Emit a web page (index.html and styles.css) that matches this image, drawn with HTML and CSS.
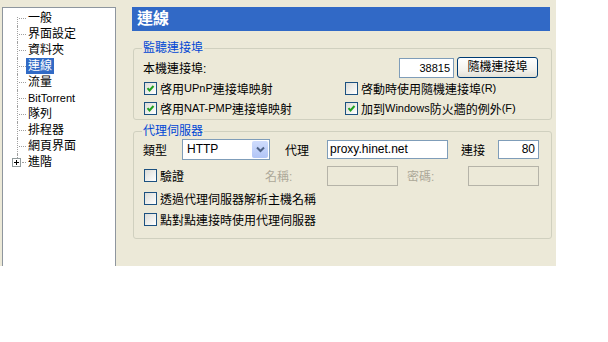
FILE: index.html
```html
<!DOCTYPE html>
<html lang="zh-Hant">
<head>
<meta charset="utf-8">
<title>連線</title>
<link rel="stylesheet" href="styles.css">
</head>
<body>
<div class="window">
  <div class="tree">
    <ul class="tree-list">
      <li class="tree-item first"><span class="tree-label">一般</span></li>
      <li class="tree-item"><span class="tree-label">界面設定</span></li>
      <li class="tree-item"><span class="tree-label">資料夾</span></li>
      <li class="tree-item"><span class="tree-label selected">連線</span></li>
      <li class="tree-item"><span class="tree-label">流量</span></li>
      <li class="tree-item"><span class="tree-label lt">BitTorrent</span></li>
      <li class="tree-item"><span class="tree-label">隊列</span></li>
      <li class="tree-item"><span class="tree-label">排程器</span></li>
      <li class="tree-item"><span class="tree-label">網頁界面</span></li>
      <li class="tree-item last"><span class="expander"><svg width="7" height="7" viewBox="0 0 7 7"><path d="M1 3.5h5M3.5 1v5" stroke="#000" stroke-width="1"/></svg></span><span class="tree-label">進階</span></li>
    </ul>
  </div>
  <div class="main">
    <div class="header">連線</div>
    <fieldset class="group group-listen">
      <legend>監聽連接埠</legend>
      <div class="port-row">
        <span class="port-label">本機連接埠:</span>
        <span class="field field-port">38815</span>
        <span class="button">隨機連接埠</span>
      </div>
      <div class="check-grid">
        <label class="check"><span class="box"><svg width="11" height="11" viewBox="0 0 11 11"><path d="M2.5 5.2l2 2.2 4-4.4" fill="none" stroke="#21A121" stroke-width="2"/></svg></span>啓用<span class="lt">UPnP</span>連接埠映射</label>
        <label class="check"><span class="box"></span>啓動時使用隨機連接埠<span class="lt">(R)</span></label>
        <label class="check"><span class="box"><svg width="11" height="11" viewBox="0 0 11 11"><path d="M2.5 5.2l2 2.2 4-4.4" fill="none" stroke="#21A121" stroke-width="2"/></svg></span>啓用<span class="lt">NAT-PMP</span>連接埠映射</label>
        <label class="check"><span class="box"><svg width="11" height="11" viewBox="0 0 11 11"><path d="M2.5 5.2l2 2.2 4-4.4" fill="none" stroke="#21A121" stroke-width="2"/></svg></span>加到<span class="lt">Windows</span>防火牆的例外<span class="lt">(F)</span></label>
      </div>
    </fieldset>
    <fieldset class="group group-proxy">
      <legend>代理伺服器</legend>
      <div class="proxy-row">
        <span class="lbl lbl-type">類型</span>
        <span class="select"><span class="select-text">HTTP</span><span class="select-btn"><svg width="9" height="7" viewBox="0 0 9 7"><path d="M1 1.5l3.5 3.5 3.5-3.5" fill="none" stroke="#4D6185" stroke-width="2"/></svg></span></span>
        <span class="lbl lbl-proxy">代理</span>
        <span class="field field-host">proxy.hinet.net</span>
        <span class="lbl lbl-conn">連接</span>
        <span class="field field-num">80</span>
      </div>
      <div class="auth-row">
        <label class="check check-auth"><span class="box"></span>驗證</label>
        <span class="lbl lbl-name disabled">名稱:</span>
        <span class="field field-off"></span>
        <span class="lbl lbl-pass disabled">密碼:</span>
        <span class="field field-off"></span>
      </div>
      <label class="check check-line"><span class="box"></span>透過代理伺服器解析主機名稱</label>
      <label class="check check-line"><span class="box"></span>點對點連接時使用代理伺服器</label>
    </fieldset>
  </div>
</div>
</body>
</html>
```
FILE: styles.css
```css
html, body {
  margin: 0;
  padding: 0;
  background: #ffffff;
}
body {
  font-family: "Liberation Sans", "Noto Sans CJK TC", sans-serif;
  font-size: 12px;
  color: #000;
}
.lt {
  font-size: 11px;
}
.window {
  width: 556px;
  height: 266px;
  background: #ECE9D8;
  display: flex;
  align-items: flex-start;
}
.tree {
  margin: 7px 0 0 2px;
  width: 112px;
  height: 259px;
  background: #fff;
  border: 1px solid #8E969E;
  border-bottom: none;
}
.tree-list {
  list-style: none;
  margin: 0;
  padding: 2px 0 0 0;
}
.tree-item {
  position: relative;
  height: 16px;
  line-height: 16px;
  padding-left: 23px;
}
.tree-item::before {
  content: "";
  position: absolute;
  left: 14px;
  top: 0;
  height: 16px;
  border-left: 1px dotted #A0A0A0;
}
.tree-item.first::before {
  top: 7px;
  height: 9px;
}
.tree-item.last::before {
  height: 4px;
}
.tree-item::after {
  content: "";
  position: absolute;
  left: 16px;
  width: 7px;
  top: 8px;
  border-top: 1px dotted #A0A0A0;
}
.tree-item.last::after {
  left: 19px;
  width: 4px;
}
.expander {
  position: absolute;
  left: 9px;
  top: 4px;
  width: 7px;
  height: 7px;
  border: 1px solid #919B9C;
  background: #fff;
  display: flex;
}
.tree-label {
  display: inline-block;
  padding: 0 2px;
  line-height: 16px;
  vertical-align: top;
}
.tree-label.selected {
  background: #316AC5;
  color: #fff;
}
.main {
  margin-left: 16px;
  padding-top: 7px;
  width: 420px;
}
.header {
  width: 418px;
  height: 24px;
  line-height: 24px;
  background: #3169C6;
  color: #fff;
  font-weight: bold;
  font-size: 16px;
  padding-left: 5px;
  box-sizing: border-box;
}
.group {
  margin: 0 0 0 1px;
  width: 419px;
  box-sizing: border-box;
  border: 1px solid #D0D0BF;
  border-radius: 3px;
  padding: 0 8px;
}
.group legend {
  color: #0046D5;
  padding: 0 1px;
  line-height: 14px;
  font-size: 12px;
}
.group-listen {
  margin-top: 10px;
  padding-bottom: 0;
}
.group-proxy {
  margin-top: 4px;
  padding-bottom: 8px;
}
.port-row {
  display: flex;
  align-items: center;
  height: 21px;
  margin-top: 2px;
  padding-left: 1px;
}
.port-label {
  flex: 1;
}
.field {
  box-sizing: border-box;
  height: 20px;
  line-height: 18px;
  border: 1px solid #7F9DB9;
  background: #fff;
  padding: 0 3px;
  display: inline-block;
  white-space: nowrap;
}
.field-port {
  width: 55px;
  text-align: right;
  font-size: 11px;
  margin-right: 3px;
}
.button {
  box-sizing: border-box;
  width: 81px;
  height: 21px;
  line-height: 19px;
  text-align: center;
  border: 1px solid #003C74;
  border-radius: 3px;
  background: linear-gradient(#FFFFFF, #F4F3EE 60%, #E3E1D6);
  margin-right: 5px;
}
.check-grid {
  display: grid;
  grid-template-columns: 201px 1fr;
  grid-auto-rows: 20px;
  padding-left: 2px;
  padding-bottom: 1px;
}
.check {
  display: flex;
  align-items: center;
  white-space: nowrap;
}
.box {
  box-sizing: border-box;
  width: 13px;
  height: 13px;
  border: 1px solid #1C5180;
  background: linear-gradient(135deg, #DCDCD7, #FFFFFF);
  margin-right: 3px;
  display: flex;
  align-items: center;
  justify-content: center;
  flex: none;
}
.proxy-row {
  display: flex;
  align-items: center;
  height: 22px;
  margin-top: 0;
  padding-left: 1px;
}
.lbl {
  display: inline-block;
}
.lbl-type { width: 39px; }
.lbl-proxy { width: 42px; margin-left: 15px; }
.lbl-conn { width: 37px; margin-left: 13px; }
.select {
  box-sizing: border-box;
  width: 88px;
  height: 21px;
  border: 1px solid #7F9DB9;
  background: #fff;
  display: flex;
  align-items: center;
  justify-content: space-between;
  padding: 1px;
}
.select-text {
  padding-left: 3px;
}
.select-btn {
  width: 16px;
  height: 17px;
  background: linear-gradient(#CFDCFD, #B1C5F6);
  border-radius: 2px;
  display: flex;
  align-items: center;
  justify-content: center;
}
.field-host {
  width: 121px;
  height: 19px;
  line-height: 17px;
  padding-left: 2px;
}
.field-num {
  width: 41px;
  height: 19px;
  line-height: 17px;
  text-align: right;
}
.auth-row {
  display: flex;
  align-items: center;
  height: 21px;
  margin-top: 5px;
  padding-left: 2px;
}
.check-auth { width: 121px; }
.disabled { color: #ACA899; }
.lbl-name { width: 62px; }
.lbl-pass { width: 61px; margin-left: 9px; }
.field-off {
  width: 71px;
  height: 20px;
  background: #ECE9D8;
  border-color: #B5B3A8;
}
.check-line {
  height: 21px;
  padding-left: 2px;
}
.check-line:first-of-type { margin-top: 2px; }
```
